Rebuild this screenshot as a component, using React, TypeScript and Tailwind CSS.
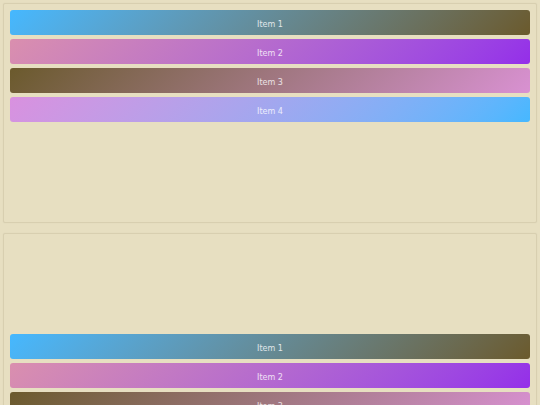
const items = [
  { label: "Item 1", cls: "bg-linear-135 from-[#45b8ff] to-[#6b5a2c]" },
  { label: "Item 2", cls: "bg-linear-135 from-[#da8fae] to-[#942ee9]" },
  { label: "Item 3", cls: "bg-linear-135 from-[#6b5a2c] to-[#d991d2]" },
  { label: "Item 4", cls: "bg-linear-135 from-[#d991df] to-[#45b8ff]" },
];

function Panel({ bottom }: { bottom?: boolean }) {
  return (
    <div
      className={`h-[220px] shrink-0 flex flex-col gap-1 p-[6px] rounded-[2px] border border-[#d8cfb0] shadow-[0_0_1px_rgba(0,0,0,0.1)] ${
        bottom ? "justify-end" : "justify-start"
      }`}
    >
      {items.map((it) => (
        <div
          key={it.label}
          className={`h-[25px] shrink-0 rounded-[3px] flex items-center justify-center pt-[4px] text-[8px] text-white/80 ${it.cls}`}
        >
          {it.label}
        </div>
      ))}
    </div>
  );
}

export default function App() {
  return (
    <div
      className="min-h-screen h-[405px] overflow-hidden bg-[#e7dfc1] flex flex-col gap-[10px] pt-[3px] pl-[3px] pr-[3px]"
      style={{ fontFamily: '"DejaVu Sans", sans-serif' }}
    >
      <Panel />
      <Panel bottom />
    </div>
  );
}
